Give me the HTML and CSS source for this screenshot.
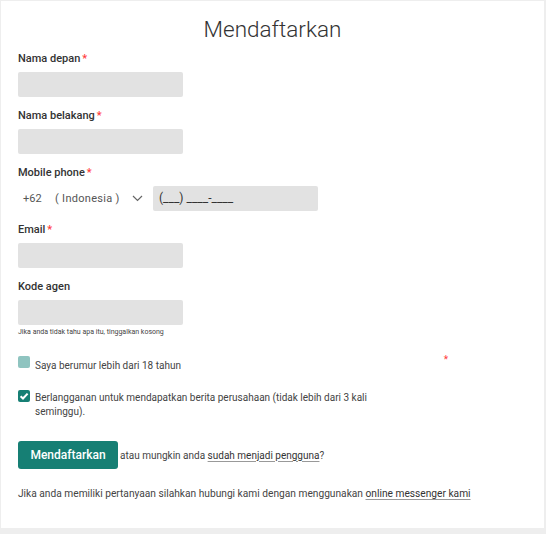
FILE: index.html
```html
<!DOCTYPE html>
<html lang="id">

<head>
    <meta charset="UTF-8">
    <meta name="viewport" content="width=device-width, initial-scale=1.0">
    <title>Mendaftarkan</title>
    <link rel="stylesheet" href="styles.css">
</head>

<body>
    <div class="main">
        <h1 class="main-heading">Mendaftarkan</h1>
        <form class="reg-form">
            <div class="field">
                <label class="field-label">Nama depan<span class="req">*</span></label>
                <input class="field-input" type="text">
            </div>
            <div class="field">
                <label class="field-label">Nama belakang<span class="req">*</span></label>
                <input class="field-input" type="text">
            </div>
            <div class="field">
                <label class="field-label">Mobile phone<span class="req">*</span></label>
                <div class="phone-row">
                    <span class="phone-code">+62</span>
                    <span class="phone-country">( Indonesia )</span>
                    <svg class="phone-arrow" width="11" height="7" viewBox="0 0 11 7">
                        <path d="M1 1 L5.5 5.5 L10 1" fill="none" stroke="#666" stroke-width="1.2" />
                    </svg>
                    <div class="phone-input">(___) ____-____</div>
                </div>
            </div>
            <div class="field">
                <label class="field-label">Email<span class="req">*</span></label>
                <input class="field-input" type="text">
            </div>
            <div class="field">
                <label class="field-label">Kode agen</label>
                <input class="field-input" type="text">
                <div class="field-hint">Jika anda tidak tahu apa itu, tinggalkan kosong</div>
            </div>

            <div class="check-row check-row_wide">
                <span class="check-box"></span>
                <span class="check-text">Saya berumur lebih dari 18 tahun</span>
                <span class="req req_far">*</span>
            </div>
            <div class="check-row">
                <span class="check-box check-box_on">
                    <svg width="12" height="12" viewBox="0 0 12 12">
                        <path d="M2.6 6.2 L5 8.5 L9.6 3.6" fill="none" stroke="#fff" stroke-width="2" />
                    </svg>
                </span>
                <span class="check-text">Berlangganan untuk mendapatkan berita perusahaan (tidak lebih dari 3 kali seminggu).</span>
            </div>

            <div class="submit-row">
                <button class="submit-btn" type="button">Mendaftarkan</button>
                <span class="submit-note">atau mungkin anda <a href="#">sudah menjadi pengguna</a>?</span>
            </div>

            <p class="footer-note">Jika anda memiliki pertanyaan silahkan hubungi kami dengan menggunakan <a href="#">online messenger kami</a></p>
        </form>
    </div>
</body>

</html>
```

FILE: styles.css
```css
* {
    margin: 0px;
    padding: 0px;
    box-sizing: border-box;
}

body {
    font-family: Roboto, "Liberation Sans", sans-serif;
    background-color: #eeeeee;
    padding: 1px 2px 6px 1px;
    color: #333333;
}

.main {
    background-color: white;
    height: 527px;
    padding: 14px 17px 0px;
}

.main-heading {
    text-align: center;
    font-size: 22.5px;
    font-weight: 300;
    color: #333333;
    line-height: 28px;
    margin: 0px 0px 7px;
}

.field {
    margin: 0px 0px 10px;
}

.field-label {
    display: block;
    font-size: 11px;
    font-weight: 500;
    line-height: 18px;
    margin: 0px 0px 4px;
}

.req {
    color: #ff3b3b;
    margin-left: 2px;
}

.field-input {
    display: block;
    width: 165px;
    height: 25px;
    border: none;
    border-radius: 2px;
    background-color: #e2e2e2;
}

.field-hint {
    font-size: 7px;
    color: #444444;
    margin: 3px 0px 0px;
}

.phone-row {
    display: flex;
    align-items: center;
    height: 25px;
    font-size: 11px;
    color: #555555;
}

.phone-code {
    margin: 0px 0px 0px 5px;
    width: 32px;
}

.phone-country {
    letter-spacing: 0.3px;
    width: 77px;
}

.phone-arrow {
    margin: 0px 10px 0px 0px;
}

.phone-input {
    width: 165px;
    height: 25px;
    line-height: 25px;
    padding: 0px 6px;
    background-color: #e2e2e2;
    border-radius: 2px;
    color: #333333;
    font-size: 12px;
}

.check-row {
    display: flex;
    align-items: flex-start;
    gap: 5px;
    font-size: 10px;
    color: #444444;
    line-height: 14px;
    width: 430px;
    margin: 0px 0px 22px;
}

.check-row_wide {
    margin: 20px 0px 17px;
}

.check-box {
    flex: none;
    width: 12px;
    height: 12px;
    border-radius: 2px;
    background-color: #8fc4c0;
}

.check-box_on {
    background-color: #167f74;
}

.check-box svg {
    display: block;
}

.check-text {
    max-width: 345px;
    padding-top: 1px;
}

.check-row_wide .check-text {
    padding-top: 3px;
}

.req_far {
    margin-left: auto;
    margin-top: -3px;
    font-size: 10px;
}

.submit-row {
    display: flex;
    align-items: center;
    gap: 2px;
    font-size: 10px;
    color: #444444;
    margin: 0px 0px 19px;
}

.submit-btn {
    width: 100px;
    height: 28px;
    border: none;
    border-radius: 3px;
    background-color: #167f74;
    color: white;
    font-family: inherit;
    font-size: 12px;
    font-weight: 500;
}

.submit-note a,
.footer-note a {
    color: #333333;
    text-decoration: underline;
    text-decoration-color: #999999;
    text-underline-offset: 2px;
}

.footer-note {
    font-size: 10.2px;
    color: #444444;
}
```
